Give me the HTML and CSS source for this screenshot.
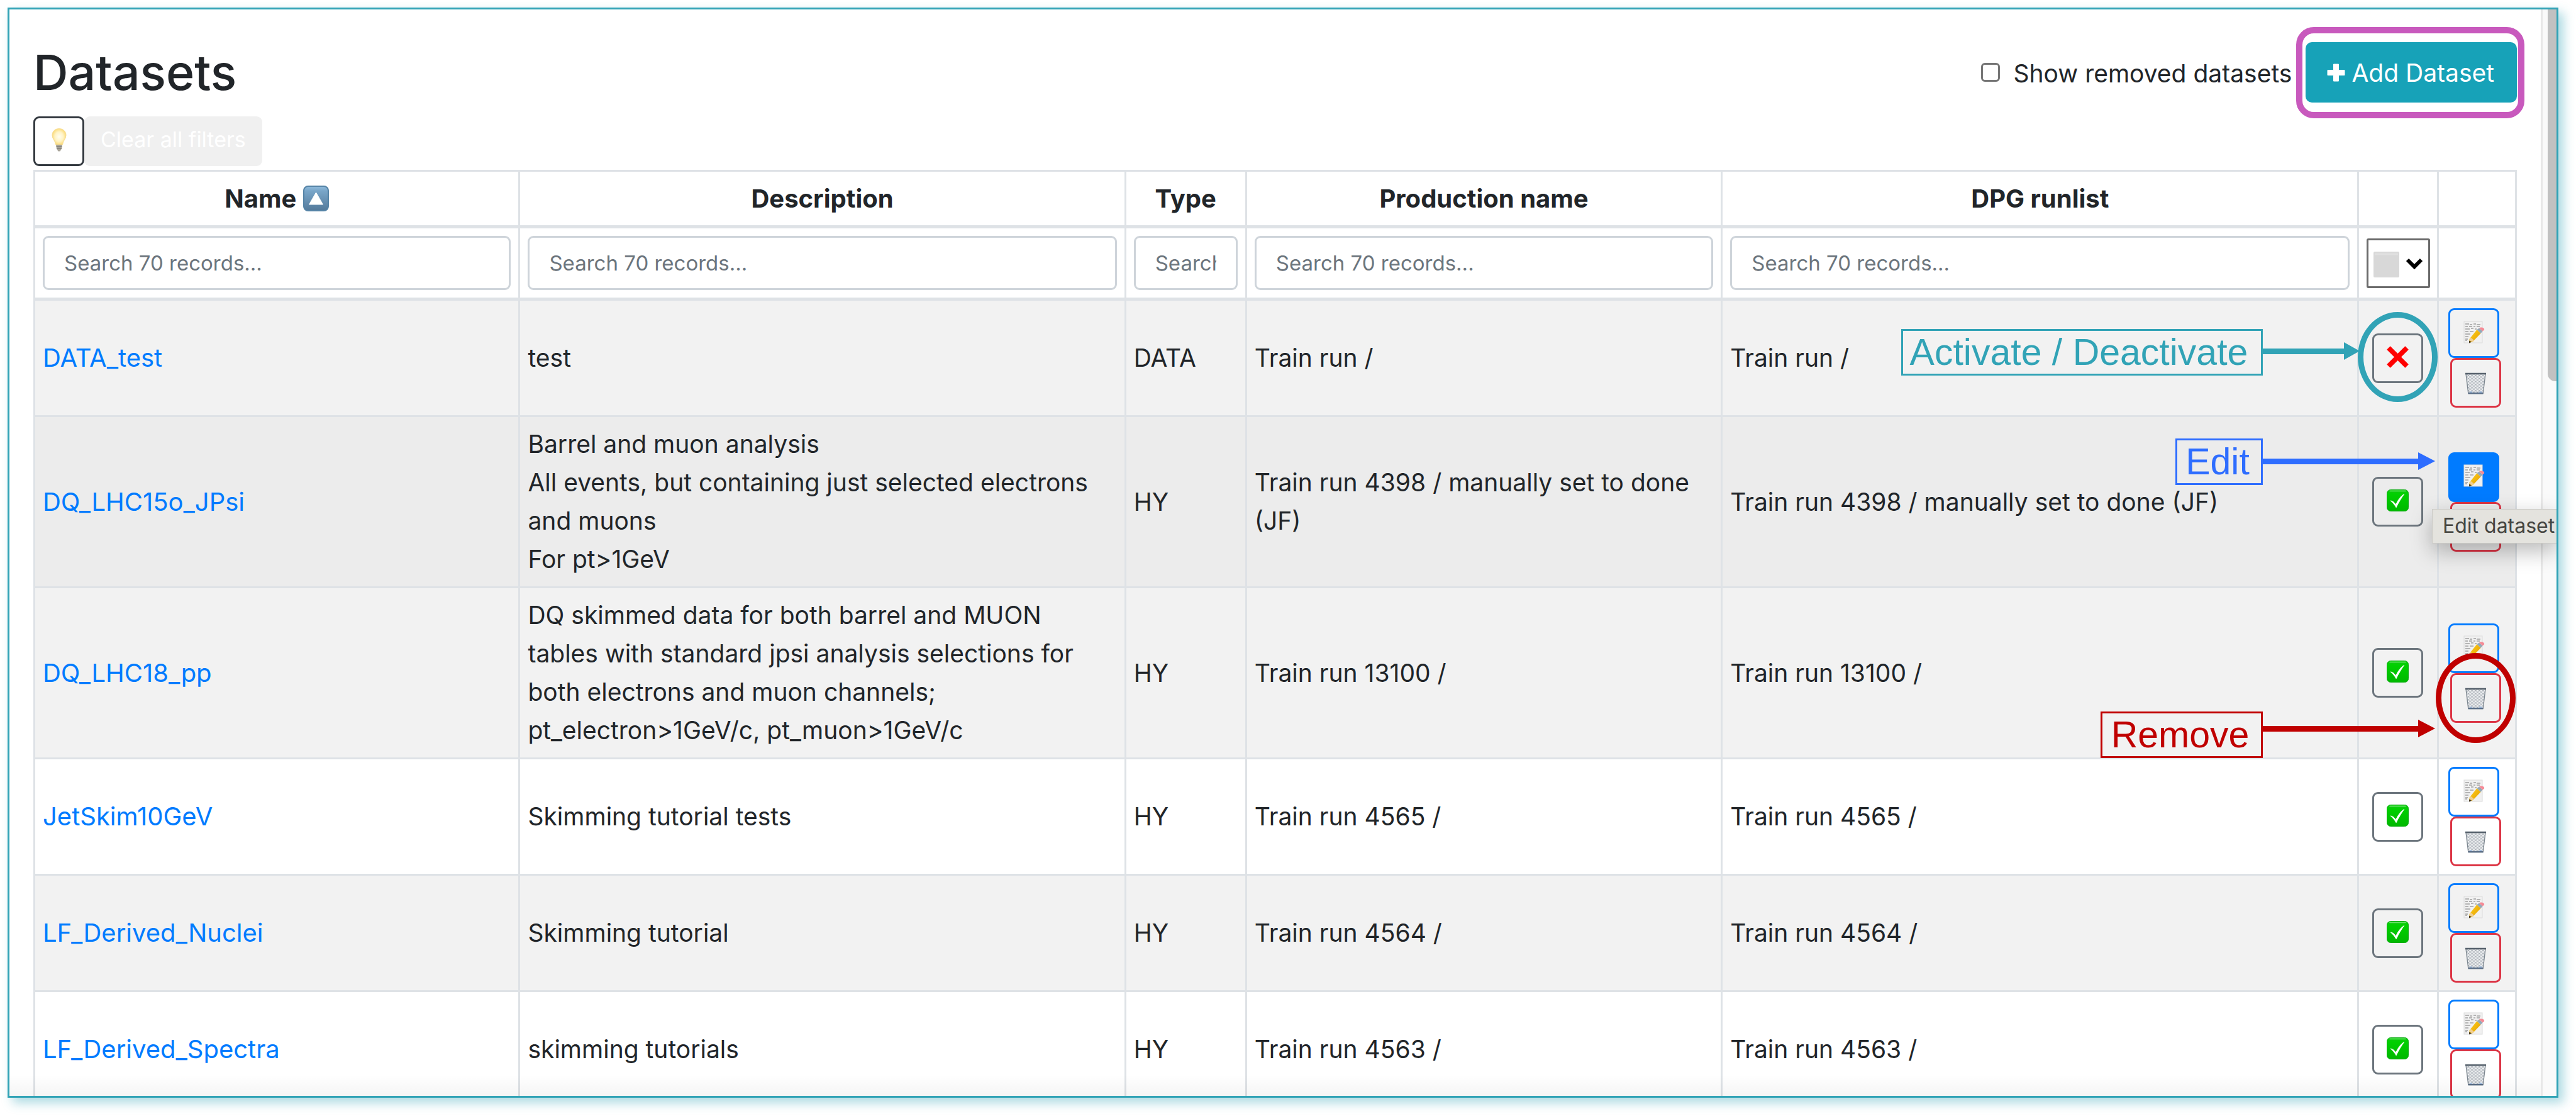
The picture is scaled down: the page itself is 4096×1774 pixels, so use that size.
FILE: index.html
```html
<!DOCTYPE html>
<html lang="en">
<head>
<meta charset="utf-8">
<title>Datasets</title>
<link rel="stylesheet" href="styles.css">
</head>
<body>
<svg class="sprite" aria-hidden="true">
  <defs>
    <linearGradient id="g-check" x1="0" y1="0" x2="0" y2="1"><stop offset="0" stop-color="#12c812"/><stop offset=".2" stop-color="#00d000"/><stop offset="1" stop-color="#00b800"/></linearGradient>
    <linearGradient id="g-sort" x1="0" y1="0" x2="0" y2="1"><stop offset="0" stop-color="#8fbbdc"/><stop offset=".2" stop-color="#78a5c8"/><stop offset="1" stop-color="#53799a"/></linearGradient>
    <linearGradient id="g-pencil" x1="0" y1="0" x2="1" y2="1"><stop offset="0" stop-color="#ffd21c"/><stop offset="1" stop-color="#e39a00"/></linearGradient>
    <radialGradient id="g-bulb" cx=".5" cy=".5" r=".5"><stop offset="0" stop-color="#fffdf0"/><stop offset=".6" stop-color="#fff3c4"/><stop offset="1" stop-color="#fbdc7e"/></radialGradient>
    <pattern id="p-mesh" width="6" height="5" patternUnits="userSpaceOnUse"><rect width="6" height="5" fill="#f0f2f4"/><path d="M0 0L6 5M6 0L0 5" stroke="#959ca4" stroke-width=".9"/></pattern>
  </defs>
  <symbol id="i-check" viewBox="0 0 36 36">
    <rect x=".5" y=".5" width="35" height="35" rx="6" fill="url(#g-check)" stroke="#0bab12"/>
    <path d="M5 2.500h26" stroke="#6be36b" stroke-width="1.500" stroke-linecap="round"/>
    <path d="M6.500 18.500C10 19 12.500 21 15 25C18 18 22 12 28.500 7.500C24 14 19.500 21 15.500 29.500C13 25 10 21.500 6.500 18.500Z" fill="#fff" stroke="#fff"/>
  </symbol>
  <symbol id="i-cross" viewBox="0 0 36 36"><path d="M3 3L33 33M33 3L3 33" stroke="#f00" stroke-width="8"/></symbol>
  <symbol id="i-memo" viewBox="0 0 34 36">
    <rect x="1" y="1" width="29" height="34" fill="#f1f1f1" stroke="#dcdcdc"/>
    <path d="M3 5h6m1 1h4m2-1h4m1 1h6M3 9h4m2 0h5m2 0h3m2 0h5M3 13h7m2-1h4m2 1h3M3 17h5m2 0h6M3 21h8M3 25h5M3 29h4m-4 2h3" stroke="#a0a0a0" stroke-width="1.600"/>
    <path d="M9.500 29L21.500 14L27.500 20L15 33L9.500 35Z" fill="url(#g-pencil)"/>
    <path d="M9 31.500L13 33.500L9 35.500Z" fill="#4a3c24"/>
    <path d="M9.500 31L14 33.500L17 31L11.500 26.500Z" fill="#f0cf94"/>
    <path d="M21.500 14L25 11.500L30.500 16.500L27.500 20Z" fill="#94a9b8"/>
    <path d="M25 11.500C27.500 9.500 34 10.500 33 14.500L30.500 16.500Z" fill="#f58b96"/>
  </symbol>
  <symbol id="i-trash" viewBox="0 0 36 36">
    <path d="M2 2H34L30 34.500H6Z" fill="url(#p-mesh)" stroke="#7d8790" stroke-width="1.400"/>
    <path d="M1 2H35" stroke="#56616c" stroke-width="2.500"/>
    <path d="M6 34H30" stroke="#5b6f88" stroke-width="2.500"/>
    <path d="M9 32h3M24 32h4" stroke="#9dbbe0" stroke-width="2"/>
  </symbol>
  <symbol id="i-bulb" viewBox="0 0 24 37">
    <path d="M12 .5C18.500 .5 23 5 23 11C23 17 18 19.500 17.500 26H6.500C6 19.500 1 17 1 11C1 5 5.500 .5 12 .5Z" fill="url(#g-bulb)" stroke="#f7dd92"/>
    <path d="M7 26H17L16 32.500L13.500 36.500H10.500L8 32.500Z" fill="#a9a59a"/>
    <path d="M7.500 29H16.500M8 32H16" stroke="#6f6c66" stroke-width="1.200"/>
  </symbol>
  <symbol id="i-sort" viewBox="0 0 41 41">
    <rect x="1" y="1" width="39" height="39" rx="7" fill="url(#g-sort)" stroke="#5583a6" stroke-width="2"/>
    <path d="M20.500 11L31.500 30H9.500Z" fill="#fff" stroke="#fff" stroke-linejoin="round"/>
  </symbol>
  <symbol id="i-plus" viewBox="0 0 29 29"><path d="M10.500 1h8v9.500H28v8h-9.500V28h-8v-9.500H1v-8h9.500Z" fill="#fff" stroke="#fff" stroke-linejoin="round"/></symbol>
</svg>

<div class="panel">
  <main class="page">
    <header class="page-header">
      <h1 class="title">Datasets</h1>
      <div class="header-tools">
        <input class="checkbox" type="checkbox" id="show-removed">
        <label class="checkbox-label" for="show-removed">Show removed datasets</label>
        <button class="add-button" type="button"><svg class="plus" aria-hidden="true"><use href="#i-plus"/></svg>Add Dataset</button>
      </div>
    </header>
    <div class="toolbar">
      <button class="icon-button hint" type="button" aria-label="Hints"><svg class="bulb" aria-hidden="true"><use href="#i-bulb"/></svg></button>
      <button class="clear-button" type="button">Clear all filters</button>
    </div>
    <table class="datasets">
      <colgroup>
        <col class="col-name"><col class="col-description"><col class="col-type"><col class="col-production"><col class="col-runlist"><col class="col-active"><col class="col-actions">
      </colgroup>
      <thead>
        <tr>
          <th scope="col"><span class="sorted">Name<svg class="sort" aria-hidden="true"><use href="#i-sort"/></svg></span></th>
          <th scope="col">Description</th><th scope="col">Type</th><th scope="col">Production name</th><th scope="col">DPG runlist</th><th></th><th></th>
        </tr>
        <tr>
          <td><input class="search" type="text" placeholder="Search 70 records..." aria-label="Search name"></td>
          <td><input class="search" type="text" placeholder="Search 70 records..." aria-label="Search description"></td>
          <td><input class="search" type="text" placeholder="Search 70 records..." aria-label="Search type"></td>
          <td><input class="search" type="text" placeholder="Search 70 records..." aria-label="Search production name"></td>
          <td><input class="search" type="text" placeholder="Search 70 records..." aria-label="Search DPG runlist"></td>
          <td class="active-cell"><span class="select-wrap"><select class="state-select" aria-label="Filter by state"><option></option></select><svg class="select-face" viewBox="0 0 101 79" aria-hidden="true"><rect x="11" y="21" width="41" height="41" rx="2" fill="#d8d8d8"/><path d="M13 25h37" stroke="#e0e0e0" stroke-width="3"/><path d="M65 34L76 45L87 34" fill="none" stroke="#000" stroke-width="6"/></svg></span></td>
          <td></td>
        </tr>
      </thead>
      <tbody>
        <tr class="striped">
          <td><a class="name" href="#DATA_test">DATA_test</a></td><td>test</td><td>DATA</td><td>Train run /</td><td>Train run /</td>
          <td class="active-cell"><button class="icon-button toggle" type="button" aria-label="Activate dataset"><svg class="icon" aria-hidden="true"><use href="#i-cross"/></svg></button></td>
          <td class="actions"><button class="icon-button edit" type="button" aria-label="Edit dataset"><svg class="memo" aria-hidden="true"><use href="#i-memo"/></svg></button><button class="icon-button remove" type="button" aria-label="Remove dataset"><svg class="icon" aria-hidden="true"><use href="#i-trash"/></svg></button></td>
        </tr>
        <tr class="hovered">
          <td><a class="name" href="#DQ_LHC15o_JPsi">DQ_LHC15o_JPsi</a></td><td>Barrel and muon analysis<br>All events, but containing just selected electrons and muons<br>For pt&gt;1GeV</td><td>HY</td><td>Train run 4398 / manually set to done (JF)</td><td>Train run 4398 / manually set to done (JF)</td>
          <td class="active-cell"><button class="icon-button toggle" type="button" aria-label="Deactivate dataset"><svg class="icon" aria-hidden="true"><use href="#i-check"/></svg></button></td>
          <td class="actions"><button class="icon-button edit edit-hover" type="button" aria-label="Edit dataset"><svg class="memo" aria-hidden="true"><use href="#i-memo"/></svg></button><button class="icon-button remove" type="button" aria-label="Remove dataset"><svg class="icon" aria-hidden="true"><use href="#i-trash"/></svg></button></td>
        </tr>
        <tr class="striped">
          <td><a class="name" href="#DQ_LHC18_pp">DQ_LHC18_pp</a></td><td>DQ skimmed data for both barrel and MUON tables with standard jpsi analysis selections for both electrons and muon channels; pt_electron&gt;1GeV/c, pt_muon&gt;1GeV/c</td><td>HY</td><td>Train run 13100 /</td><td>Train run 13100 /</td>
          <td class="active-cell"><button class="icon-button toggle" type="button" aria-label="Deactivate dataset"><svg class="icon" aria-hidden="true"><use href="#i-check"/></svg></button></td>
          <td class="actions"><button class="icon-button edit" type="button" aria-label="Edit dataset"><svg class="memo" aria-hidden="true"><use href="#i-memo"/></svg></button><button class="icon-button remove" type="button" aria-label="Remove dataset"><svg class="icon" aria-hidden="true"><use href="#i-trash"/></svg></button></td>
        </tr>
        <tr>
          <td><a class="name" href="#JetSkim10GeV">JetSkim10GeV</a></td><td>Skimming tutorial tests</td><td>HY</td><td>Train run 4565 /</td><td>Train run 4565 /</td>
          <td class="active-cell"><button class="icon-button toggle" type="button" aria-label="Deactivate dataset"><svg class="icon" aria-hidden="true"><use href="#i-check"/></svg></button></td>
          <td class="actions"><button class="icon-button edit" type="button" aria-label="Edit dataset"><svg class="memo" aria-hidden="true"><use href="#i-memo"/></svg></button><button class="icon-button remove" type="button" aria-label="Remove dataset"><svg class="icon" aria-hidden="true"><use href="#i-trash"/></svg></button></td>
        </tr>
        <tr class="striped">
          <td><a class="name" href="#LF_Derived_Nuclei">LF_Derived_Nuclei</a></td><td>Skimming tutorial</td><td>HY</td><td>Train run 4564 /</td><td>Train run 4564 /</td>
          <td class="active-cell"><button class="icon-button toggle" type="button" aria-label="Deactivate dataset"><svg class="icon" aria-hidden="true"><use href="#i-check"/></svg></button></td>
          <td class="actions"><button class="icon-button edit" type="button" aria-label="Edit dataset"><svg class="memo" aria-hidden="true"><use href="#i-memo"/></svg></button><button class="icon-button remove" type="button" aria-label="Remove dataset"><svg class="icon" aria-hidden="true"><use href="#i-trash"/></svg></button></td>
        </tr>
        <tr>
          <td><a class="name" href="#LF_Derived_Spectra">LF_Derived_Spectra</a></td><td>skimming tutorials</td><td>HY</td><td>Train run 4563 /</td><td>Train run 4563 /</td>
          <td class="active-cell"><button class="icon-button toggle" type="button" aria-label="Deactivate dataset"><svg class="icon" aria-hidden="true"><use href="#i-check"/></svg></button></td>
          <td class="actions"><button class="icon-button edit" type="button" aria-label="Edit dataset"><svg class="memo" aria-hidden="true"><use href="#i-memo"/></svg></button><button class="icon-button remove" type="button" aria-label="Remove dataset"><svg class="icon" aria-hidden="true"><use href="#i-trash"/></svg></button></td>
        </tr>
      </tbody>
    </table>
  </main>
  <div class="scrollbar"><div class="thumb"></div></div>

  <div class="tooltip" role="tooltip">Edit dataset</div>
  <div class="bottom-shade"></div>
  <div class="callout-ring add-ring"></div>
  <div class="callout-ring toggle-ring"></div>
  <div class="callout-ring remove-ring"></div>
  <div class="callout activate-callout">Activate / Deactivate</div>
  <svg class="arrow activate-arrow" aria-hidden="true"><path d="M0 10H129V0L154 14L129 28V19H0Z"/></svg>
  <div class="callout edit-callout">Edit</div>
  <svg class="arrow edit-arrow" aria-hidden="true"><path d="M0 10H247V0L274 14L247 28V19H0Z"/></svg>
  <div class="callout remove-callout">Remove</div>
  <svg class="arrow remove-arrow" aria-hidden="true"><path d="M0 10H247V0L274 14L247 28V19H0Z"/></svg>
</div>
</body>
</html>
```
FILE: styles.css
```css
* { box-sizing: border-box; }

body {
  margin: 0;
  height: 100vh;
  padding: 12px 28px 29px 12px;
  background: #fff;
  color: #212529;
  font-family: Inter, "Liberation Sans", sans-serif;
  font-size: 39px;
  line-height: 61px;
  overflow: hidden;
}

button, input, select { font-family: inherit; margin: 0; }

.sprite { position: absolute; width: 0; height: 0; }

.panel {
  position: relative;
  display: flex;
  height: 100%;
  overflow: hidden;
  border: 3px solid #31a3b6;
  background: #fff;
}

body::before {
  content: "";
  position: absolute;
  inset: 12px 28px 29px 12px;
  box-shadow: 8px 8px 16px rgba(49, 163, 182, 0.4);
}

.page { flex: 1; min-width: 0; padding: 52px 38px 0; }

.page-header {
  display: flex;
  align-items: center;
  justify-content: space-between;
  height: 96px;
}

.title { margin: 0; font-size: 77px; font-weight: 500; line-height: 100px; }

.header-tools { display: flex; align-items: center; gap: 22px; }

.checkbox {
  appearance: none;
  width: 30px;
  height: 30px;
  border: 3px solid #767676;
  border-radius: 6px;
  background: #fff;
}

.checkbox-label { padding-top: 3px; }

.add-button {
  display: flex;
  align-items: center;
  gap: 10px;
  height: 96px;
  padding: 0 36px 0 34px;
  border: 0;
  border-radius: 10px;
  background: #17a2b8;
  color: #fff;
  font-size: 39px;
}

.plus { width: 29px; height: 29px; }

.toolbar { display: flex; margin: 22px 0 6px; }

.icon-button {
  display: flex;
  align-items: center;
  justify-content: center;
  width: 81px;
  height: 79px;
  padding: 0 0 4px;
  border: 3px solid;
  border-radius: 9px;
  background: none;
}

.icon { width: 35px; height: 35px; }
.memo { width: 34px; height: 36px; }
.bulb { width: 24px; height: 37px; }
.sort { width: 41px; height: 41px; }

.hint { border-color: #343a40; }

.clear-button {
  height: 79px;
  padding: 0 26px 7px;
  border: 0;
  border-radius: 9px;
  background: #f0f0f0;
  color: #fff;
  font-size: 34px;
}

.datasets {
  width: 100%;
  table-layout: fixed;
  border-collapse: separate;
  border-spacing: 0;
  border: solid #dee2e6;
  border-width: 3px 0 0 3px;
}

.col-name { width: 19.55%; }
.col-description { width: 24.41%; }
.col-type { width: 4.87%; }
.col-production { width: 19.17%; }
.col-runlist { width: 25.65%; }
.col-active { width: 3.22%; }
.col-actions { width: 3.13%; }

.datasets th, .datasets td {
  padding: 12px;
  border: solid #dee2e6;
  border-width: 0 3px 3px 0;
  text-align: left;
  vertical-align: middle;
}

.datasets th { text-align: center; font-size: 40px; font-weight: 700; }
.datasets thead th, .datasets thead td { border-bottom-width: 5px; }
.datasets tbody td { padding: 12px 12px 13px; }
.datasets .active-cell { padding: 0; }
.datasets tbody .actions { padding: 12px 12px 12px 15px; }

.striped { background: #f2f2f2; }
.hovered { background: #ececec; }

.sorted { display: inline-flex; align-items: center; gap: 11px; }

.name { color: #007bff; font-size: 40px; text-decoration: none; }

.search {
  display: block;
  width: 100%;
  height: 86px;
  padding: 0 31px;
  border: 3px solid #ced4da;
  border-radius: 9px;
  background: #fff;
  font-size: 33px;
}

.search::placeholder { color: #6c757d; opacity: 1; }

.select-wrap { position: relative; display: block; width: 101px; margin: 0 auto; }

.state-select {
  appearance: none;
  display: block;
  width: 101px;
  height: 79px;
  border: 3px solid #6b6b6b;
  border-radius: 3px;
  background: #fff;
}

.select-face { position: absolute; inset: 0; pointer-events: none; }

.toggle { margin-left: 21px; border-color: #6c757d; }
.edit { border-color: #007bff; }
.edit-hover { background: #007bff; }
.remove { margin-left: 3px; padding: 2px 0 0; border-color: #dc3545; }

.scrollbar { width: 25px; border-left: 3px solid #e8e8e8; background: #fafafa; }

.thumb {
  width: 14px;
  height: 591px;
  margin-left: auto;
  border-radius: 0 0 0 12px;
  background: #c1c1c1;
}

.tooltip {
  position: absolute;
  top: 794px;
  right: 0;
  width: 198px;
  height: 55px;
  padding-left: 16px;
  border: solid #cbcac6;
  border-width: 1px 0 1px 1px;
  background: #e4e3de;
  box-shadow: 0 12px 34px rgba(0, 0, 0, 0.28);
  color: #454541;
  font-size: 32px;
  line-height: 51px;
  white-space: nowrap;
}

.bottom-shade {
  position: absolute;
  inset: auto 25px 0 0;
  height: 34px;
  background: linear-gradient(rgba(0, 0, 0, 0), rgba(0, 0, 0, 0.04));
}

.callout-ring { position: absolute; border: 9px solid; border-radius: 50%; }

.add-ring {
  top: 28px;
  right: 51px;
  width: 363px;
  height: 145px;
  border: 10px solid #c859bd;
  border-radius: 28px;
}

.toggle-ring { top: 481px; right: 189px; width: 127px; height: 143px; border-color: #31a3b6; }
.remove-ring { top: 1023px; right: 65px; width: 127px; height: 143px; border-color: #c00000; }

.callout {
  position: absolute;
  right: 467px;
  height: 74px;
  padding-right: 5px;
  border: 3px solid;
  font-family: "Liberation Sans", Arial, sans-serif;
  font-size: 59px;
  line-height: 68px;
  text-align: center;
  white-space: nowrap;
}

.activate-callout { top: 508px; width: 575px; padding-right: 10px; color: #31a3b6; }
.edit-callout { top: 682px; width: 139px; color: #2e6dff; }
.remove-callout { top: 1116px; width: 258px; color: #c00000; }

.arrow { position: absolute; width: 274px; height: 28px; }
.activate-arrow { top: 529px; right: 193px; fill: #31a3b6; }
.edit-arrow { top: 704px; right: 193px; fill: #2e6dff; }
.remove-arrow { top: 1129px; right: 193px; fill: #c00000; }
```
